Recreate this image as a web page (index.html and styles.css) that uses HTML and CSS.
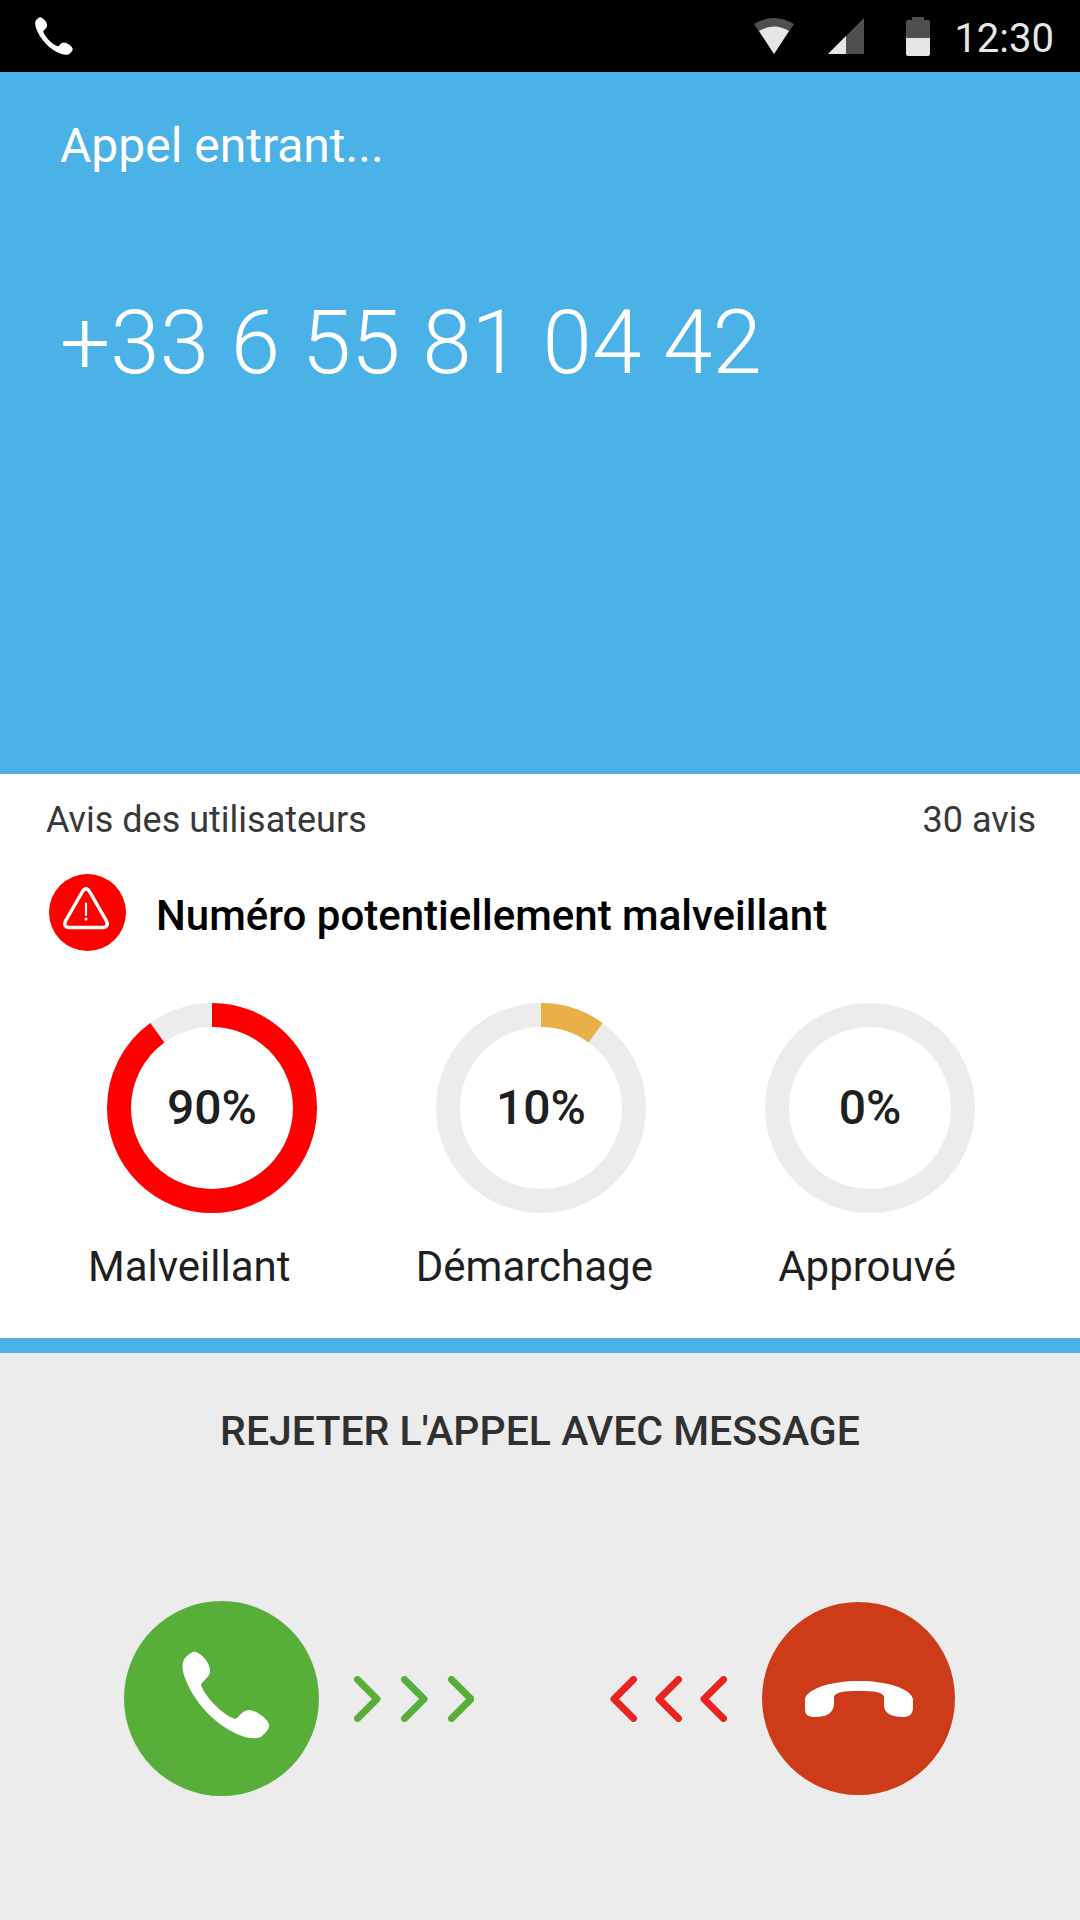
FILE: index.html
```html
<!DOCTYPE html>
<html lang="fr">
<head>
  <meta charset="UTF-8" />
  <meta name="viewport" content="width=device-width, initial-scale=1.0"/>
  <title>Appel entrant</title>
  <link rel="stylesheet" href="styles.css">
</head>
<body>
  <div class="status-bar">
    <svg class="status-phone" viewBox="0 0 88 88" aria-hidden="true">
      <path d="M4 6C8 2 11 0 14 1C21 4 29 13 28 21C27 27 20 30 19 34C23 46 41 64 53 68C57 67 59 60 66 59C74 59 85 67 87 73C88 78 84 81 80 85C77 88 68 88 60 85C33 75 12 51 3 27C0 19 -1 11 4 6Z"/>
    </svg>
    <div class="status-icons">
      <svg width="40" height="36" viewBox="0 0 40 36" aria-hidden="true">
        <path class="dim" d="M0 6Q20 -6 40 6L20 36Z"/>
        <path class="lit" d="M5 13Q20 4 35 13L20 36Z"/>
      </svg>
      <svg width="36" height="36" viewBox="0 0 36 36" aria-hidden="true">
        <path class="dim" d="M36 0V36H0Z"/>
        <path class="lit" d="M18 18V36H0Z"/>
      </svg>
      <svg class="battery" width="24" height="39" viewBox="0 0 24 39" aria-hidden="true">
        <path class="dim" d="M6 0H18V3H22Q24 3 24 5V21H0V5Q0 3 2 3H6Z"/>
        <path class="lit" d="M0 21H24V37Q24 39 22 39H2Q0 39 0 37Z"/>
      </svg>
      <span class="time">12:30</span>
    </div>
  </div>

  <header>
    <p class="call-state">Appel entrant...</p>
    <h1>+33 6 55 81 04 42</h1>
  </header>

  <section class="reviews">
    <div class="reviews-head">
      <span>Avis des utilisateurs</span>
      <span>30 avis</span>
    </div>

    <div class="alert">
      <svg width="77" height="77" viewBox="0 0 77 77" aria-hidden="true">
        <circle cx="38.5" cy="38.5" r="38.5" fill="#fe0000"/>
        <path d="M33.500 17.500Q37 12 40.500 17.500L57.500 47Q60 53 54 53.500H20Q14 53 16.500 47Z" fill="none" stroke="#fff" stroke-width="3.500" stroke-linejoin="round"/>
        <path d="M37 29.500V41" stroke="#fff" stroke-width="2.200" stroke-linecap="round"/>
        <circle cx="37" cy="45" r="1.600" fill="#fff"/>
      </svg>
      <h2>Numéro potentiellement malveillant</h2>
    </div>

    <div class="rings">
      <div class="ring">
        <svg viewBox="0 0 210 210" aria-hidden="true">
          <circle class="track" cx="105" cy="105" r="93"/>
          <circle class="value red" cx="105" cy="105" r="93" pathLength="100" stroke-dasharray="90 100"/>
        </svg>
        <span>90%</span>
      </div>
      <div class="ring">
        <svg viewBox="0 0 210 210" aria-hidden="true">
          <circle class="track" cx="105" cy="105" r="93"/>
          <circle class="value amber" cx="105" cy="105" r="93" pathLength="100" stroke-dasharray="10 100"/>
        </svg>
        <span>10%</span>
      </div>
      <div class="ring">
        <svg viewBox="0 0 210 210" aria-hidden="true">
          <circle class="track" cx="105" cy="105" r="93"/>
        </svg>
        <span>0%</span>
      </div>
    </div>

    <div class="ring-labels">
      <span>Malveillant</span>
      <span>Démarchage</span>
      <span>Approuvé</span>
    </div>
  </section>

  <section class="actions">
    <button class="reject-message">REJETER L'APPEL AVEC MESSAGE</button>

    <div class="answer-row">
      <div class="answer">
        <button class="round accept" aria-label="Répondre">
          <svg width="88" height="88" viewBox="0 0 88 88" aria-hidden="true">
            <path d="M4 6C8 2 11 0 14 1C21 4 29 13 28 21C27 27 20 30 19 34C23 46 41 64 53 68C57 67 59 60 66 59C74 59 85 67 87 73C88 78 84 81 80 85C77 88 68 88 60 85C33 75 12 51 3 27C0 19 -1 11 4 6Z"/>
          </svg>
        </button>
        <svg class="arrows green" width="120" height="46" viewBox="0 0 120 46" aria-hidden="true">
          <path d="M3.500 3.500L23 23L3.500 42.500M50.500 3.500L70 23L50.500 42.500M97.500 3.500L117 23L97.500 42.500"/>
        </svg>
      </div>

      <div class="answer">
        <svg class="arrows crimson" width="117" height="46" viewBox="0 0 117 46" aria-hidden="true">
          <path d="M23.500 3.500L4 23L23.500 42.500M68.500 3.500L49 23L68.500 42.500M113.500 3.500L94 23L113.500 42.500"/>
        </svg>
        <button class="round decline" aria-label="Raccrocher">
          <svg width="108" height="36" viewBox="0 0 108 36" aria-hidden="true">
            <path d="M0 18C2 8 25 0 54 0C83 0 106 8 108 18V28C107 34 104 36 98 36C86 36 79 32 79 24V16C78 11 70 10 54 10C38 10 30 11 29 16V22C29 32 22 36 10 36C3 36 0 34 0 28Z"/>
          </svg>
        </button>
      </div>
    </div>
  </section>
</body>
</html>
```

FILE: styles.css
```css
:root {
  --blue: #4ab2e6;
  --grey: #ececec;
  --ink: #1f1f1f;
}

* {
  box-sizing: border-box;
}

body {
  margin: 0;
  min-height: 100vh;
  display: flex;
  flex-direction: column;
  font-family: Roboto, sans-serif;
  background: var(--grey);
  color: var(--ink);
}

h1,
h2,
p {
  margin: 0;
}

svg {
  display: block;
}

button {
  border: none;
  background: none;
  padding: 0;
  font-family: inherit;
  color: inherit;
  cursor: pointer;
}

.status-bar {
  display: flex;
  justify-content: space-between;
  align-items: center;
  height: 72px;
  padding: 0 26px 0 35px;
  background: #000;
}

.status-phone {
  width: 38px;
  height: 38px;
  fill: #fff;
}

.status-icons {
  display: flex;
  align-items: center;
  color: #e6e6e6;
}

.status-icons svg {
  margin-right: 34px;
}

.status-icons .battery {
  margin-left: 8px;
  margin-right: 24px;
}

.dim {
  fill: #4f4f4f;
}

.lit {
  fill: #e6e6e6;
}

.time {
  padding-top: 6px;
  font-size: 40px;
  line-height: 48px;
}

header {
  flex: 1;
  padding: 46px 60px;
  background: var(--blue);
  color: #fff;
}

.call-state {
  font-size: 48px;
  line-height: 56px;
}

h1 {
  margin-top: 115px;
  font-size: 89px;
  line-height: 108px;
  font-weight: 300;
}

.reviews {
  background: #fff;
  border-bottom: 15px solid var(--blue);
  padding-bottom: 47px;
}

.reviews-head {
  display: flex;
  justify-content: space-between;
  padding: 24px 44px 0 46px;
  font-size: 36px;
  line-height: 44px;
  color: #383838;
}

.alert {
  display: flex;
  align-items: center;
  gap: 30px;
  padding: 32px 49px 0;
}

h2 {
  padding-top: 6px;
  font-size: 42px;
  line-height: 48px;
  font-weight: 500;
  color: #000;
}

.rings {
  display: flex;
  justify-content: space-between;
  padding: 52px 105px 0 107px;
}

.ring {
  display: grid;
  place-items: center;
  width: 210px;
}

.ring > * {
  grid-area: 1 / 1;
}

.ring span {
  font-size: 48px;
  line-height: 56px;
  font-weight: 500;
}

.ring svg {
  width: 100%;
  transform: rotate(-90deg);
}

.ring circle {
  fill: none;
  stroke-width: 24;
}

.track {
  stroke: var(--grey);
}

.ring .red {
  stroke: #fe0000;
}

.ring .amber {
  stroke: #eab048;
}

.ring-labels {
  display: flex;
  justify-content: space-between;
  padding: 30px 124px 0 88px;
  font-size: 42px;
  line-height: 48px;
}

.actions {
  padding: 54px 0 124px;
}

.reject-message {
  display: block;
  margin: 0 auto;
  font-size: 41px;
  line-height: 48px;
  font-weight: 500;
  color: #303030;
}

.answer-row {
  display: flex;
  justify-content: space-between;
  align-items: center;
  margin-top: 146px;
  padding: 0 125px 0 124px;
}

.answer {
  display: flex;
  align-items: center;
  gap: 35px;
}

.round {
  display: flex;
  justify-content: center;
  align-items: center;
  width: 195px;
  height: 195px;
  border-radius: 50%;
}

.round svg {
  fill: #fff;
}

.accept {
  padding: 0 0 8px 8px;
  background: #57af39;
}

.decline {
  width: 193px;
  height: 193px;
  background: #ce3b18;
}

.arrows {
  fill: none;
  stroke-width: 7;
  stroke-linecap: round;
  stroke-linejoin: round;
}

.green {
  stroke: #57af39;
}

.crimson {
  stroke: #e92222;
}
```
